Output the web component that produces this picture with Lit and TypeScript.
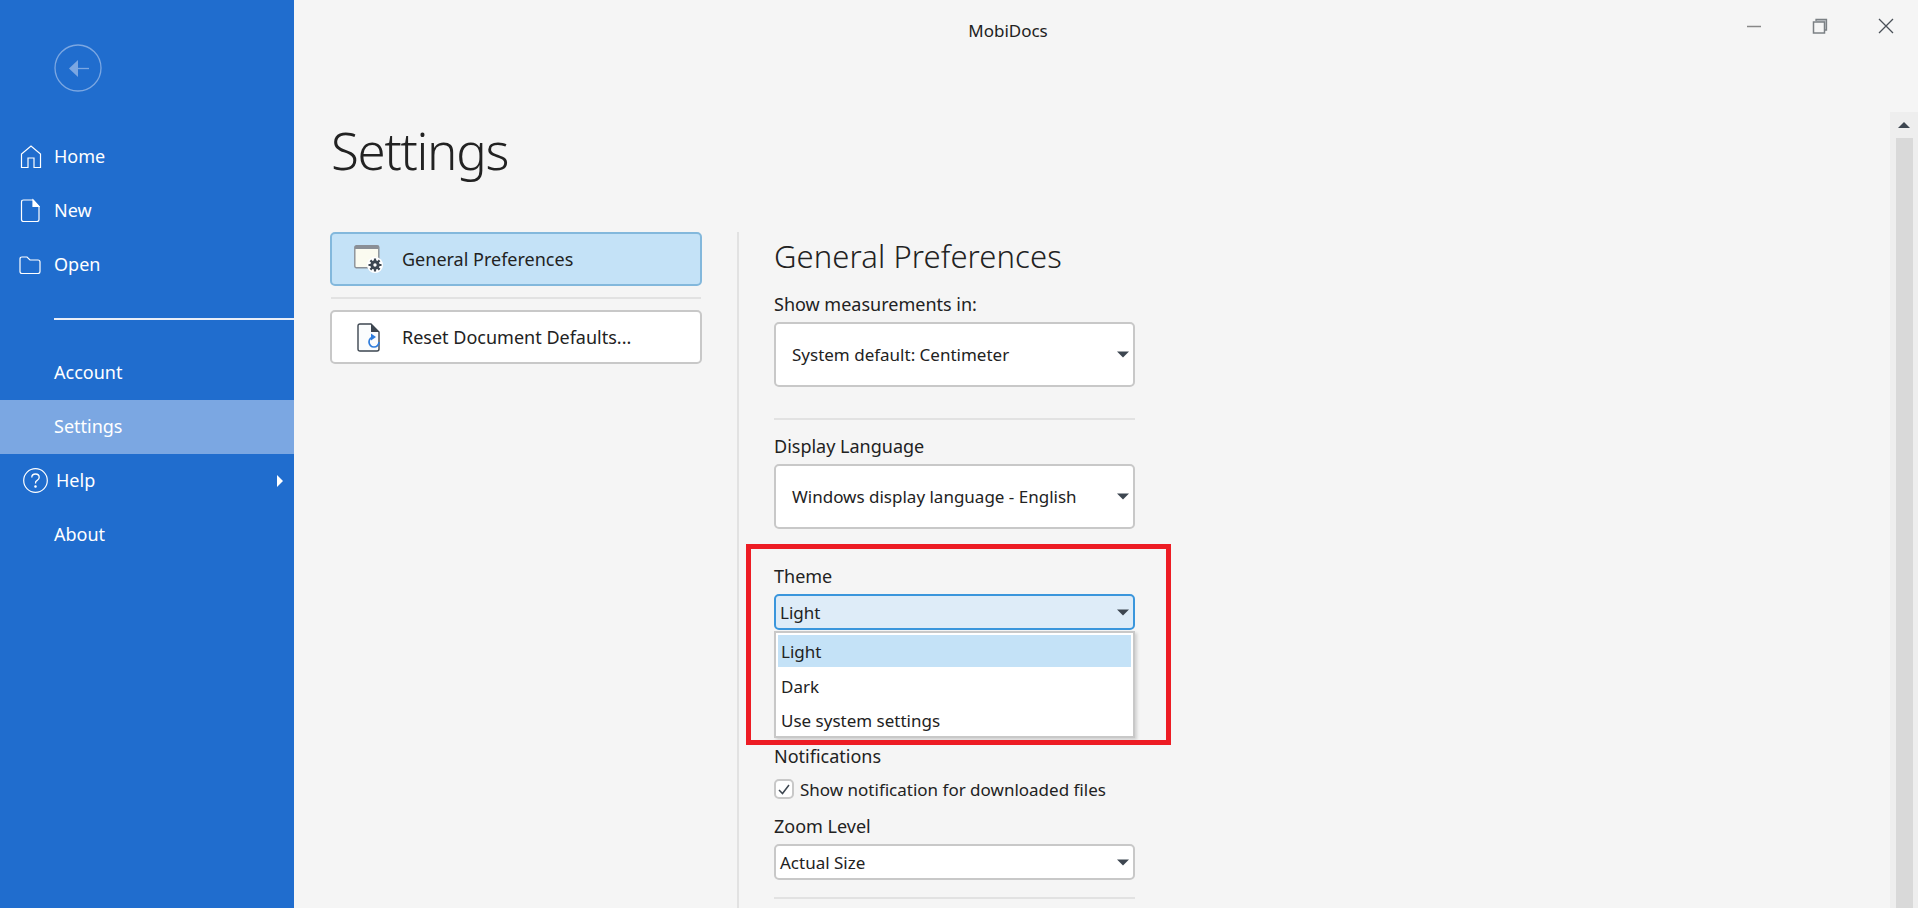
import { LitElement, html, css } from "lit";
import { customElement } from "lit/decorators.js";

const caret = html`<svg width="12" height="7" viewBox="0 0 12 7"><path d="M0 0.5h12L6 6.5z" fill="#3d4650"/></svg>`;

const select = (label: string, cls = "") => html`
  <div class="select ${cls}">
    <span>${label}</span>
    ${caret}
  </div>
`;

@customElement("app-root")
export class AppRoot extends LitElement {
  static styles = css`
    :host {
      display: flex;
      height: 100vh;
      overflow: hidden;
      background: #f5f5f5;
      color: #222;
      font-family: "Noto Sans", "Open Sans", sans-serif;
      font-size: 17px;
    }

    /* left blue panel */
    .side {
      width: 294px;
      flex: none;
      background: #206dce;
      color: #fff;
      padding-top: 44px;
    }
    .back {
      display: block;
      margin: 0 0 37px 54px;
    }
    .nav-item {
      height: 54px;
      display: flex;
      align-items: center;
      position: relative;
      font-size: 18px;
    }
    .nav-item.low {
      box-sizing: border-box;
      padding-bottom: 2px;
    }
    .nav-item.active {
      background: #7ba7e2;
    }
    .slot {
      width: 54px;
      flex: none;
      display: flex;
    }
    .slot.wide {
      width: 56px;
    }
    .slot svg {
      fill: none;
      stroke: #fff;
      stroke-width: 1.2;
    }
    .at-19 { margin-left: 19px; }
    .at-20 { margin-left: 20px; }
    .at-23 { margin-left: 23px; }
    .nav-rule {
      height: 2px;
      background: #e8eef8;
      margin: 27px 0 26px 54px;
    }
    .help-arrow {
      position: absolute;
      right: 11px;
      top: 21px;
    }

    /* everything right of the panel */
    .main {
      flex: 1;
      min-width: 0;
      display: flex;
      flex-direction: column;
    }
    .titlebar {
      height: 60px;
      flex: none;
      display: flex;
      align-items: center;
      justify-content: center;
      position: relative;
      padding-right: 196px;
    }
    .win {
      position: absolute;
      right: 24px;
      top: 18px;
      display: flex;
      gap: 50px;
      align-items: center;
    }
    .body {
      flex: 1;
      min-height: 0;
      display: flex;
    }
    .content {
      flex: 1;
      min-width: 0;
      padding-left: 36px;
      display: flex;
      flex-direction: column;
    }
    .scrollbar {
      width: 28px;
      flex: none;
      margin-top: 52px;
      background: #eeeeee;
      display: flex;
      flex-direction: column;
      align-items: center;
    }
    .scrollbar svg {
      margin: 10px 0;
    }
    .thumb {
      flex: 1;
      width: 17px;
      background: #d9d9d9;
    }

    h1 {
      margin: 58px 0 50px 1px;
      font-weight: 300;
      font-size: 51px;
      letter-spacing: -1.3px;
      line-height: 64px;
      color: #222;
    }
    .columns {
      flex: 1;
      min-height: 0;
      display: flex;
      font-size: 18px;
    }
    .left {
      width: 372px;
      flex: none;
    }
    .btn {
      height: 54px;
      box-sizing: border-box;
      border: 2px solid #c8c8c8;
      border-radius: 5px;
      background: #fff;
      display: flex;
      align-items: center;
      padding-left: 22px;
    }
    .btn.selected {
      background: #c4e2f7;
      border-color: #83b8dc;
    }
    .btn .icon {
      width: 30px;
      margin-right: 18px;
      display: flex;
      justify-content: center;
    }
    .btn-rule {
      height: 2px;
      background: #e2e2e2;
      margin: 11px 1px;
    }
    .right {
      margin-left: 35px;
      padding-left: 35px;
      border-left: 2px solid #e2e2e2;
      width: 361px;
    }
    h2 {
      margin: 0;
      font-weight: 300;
      font-size: 31px;
      letter-spacing: 0.1px;
      line-height: 40px;
      padding-top: 4px;
      height: 56px;
    }
    .label {
      line-height: 24px;
      display: block;
    }
    .label.zoom {
      margin-top: 15px;
    }
    .select {
      box-sizing: border-box;
      border: 2px solid #c8c8c8;
      border-radius: 5px;
      background: #fff;
      display: flex;
      align-items: center;
      justify-content: space-between;
      padding: 0 4px;
      height: 36px;
      margin-top: 6px;
      font-size: 17px;
    }
    .select.tall {
      height: 65px;
      margin-top: 6px;
      padding-left: 16px;
    }
    .select.focus {
      background: #deecf8;
      border-color: #3a96dc;
    }
    .rule {
      height: 2px;
      background: #e2e2e2;
    }
    .rule.a { margin: 31px 0 14px; }
    .rule.b { margin: 18px 0 15px; }
    .rule.c { margin-top: 17px; }
    .theme {
      position: relative;
      height: 180px;
    }
    .popup {
      position: absolute;
      top: 67px;
      left: 0;
      right: 0;
      box-sizing: border-box;
      height: 107px;
      background: #fff;
      border: 2px solid #c8c8c8;
      box-shadow: 2px 2px 3px rgba(0, 0, 0, 0.15);
      padding: 2px;
      font-size: 17px;
    }
    .option {
      height: 34px;
      box-sizing: border-box;
      padding: 0 0 2px 3px;
      display: flex;
      align-items: center;
    }
    .option.on {
      background: #c4e2f7;
      height: 32px;
      padding-bottom: 0;
      margin-bottom: 3px;
    }
    .check-row {
      display: flex;
      align-items: center;
      gap: 6px;
      margin-top: 11px;
      height: 20px;
      font-size: 17px;
    }
    .check {
      width: 20px;
      height: 20px;
      box-sizing: border-box;
      border: 2px solid #c8c8c8;
      border-radius: 5px;
      background: #fff;
      display: flex;
      align-items: center;
      justify-content: center;
    }

    /* review marking on top of the picture */
    .mark {
      position: absolute;
      left: 746px;
      top: 544px;
      width: 425px;
      height: 201px;
      box-sizing: border-box;
      border: 5px solid #ed1c24;
      pointer-events: none;
    }
  `;

  render() {
    return html`
      <aside class="side">
        <svg class="back" width="48" height="48" viewBox="0 0 48 48">
          <circle cx="24" cy="24" r="23" fill="none" stroke="#7ba7e2" stroke-width="1.300"/>
          <path d="M15 24.500l9-8.500v17z" fill="#7ba7e2"/>
          <path d="M22 24.500h13" stroke="#7ba7e2" stroke-width="1.300"/>
        </svg>
        <div class="nav-item">
          <span class="slot"><svg class="at-20" width="22" height="24" viewBox="0 0 22 24"><path d="M1.500 23.500V10L11 2l9.500 8v13.500H14v-9.500H8v9.500z"/></svg></span>
          Home
        </div>
        <div class="nav-item">
          <span class="slot"><svg class="at-20" width="20" height="24" viewBox="0 0 20 24"><path d="M3.500 2H13l6 6.500V21.500q0 2-2 2H3.500q-2 0-2-2V4q0-2 2-2z"/><path d="M13 2l6 6.500h-6z" fill="#fff"/></svg></span>
          New
        </div>
        <div class="nav-item">
          <span class="slot"><svg class="at-19" width="22" height="20" viewBox="0 0 22 20"><path d="M1 5q0-2 2-2h5l3 3h8q2 0 2 2v9.500q0 2-2 2H3q-2 0-2-2z"/></svg></span>
          Open
        </div>
        <div class="nav-rule"></div>
        <div class="nav-item low"><span class="slot"></span>Account</div>
        <div class="nav-item low active"><span class="slot"></span>Settings</div>
        <div class="nav-item low">
          <span class="slot wide">
            <svg class="at-23" width="25" height="25" viewBox="0 0 25 25">
              <circle cx="12.500" cy="12.500" r="11.800"/>
              <path d="M8.800 9.500q0-3.500 3.700-3.500t3.700 3.300q0 2-2 3t-1.700 3.200" stroke-width="1.300"/>
              <circle cx="12.500" cy="18.500" r="0.700" fill="#fff"/>
            </svg>
          </span>
          Help
          <svg class="help-arrow" width="6" height="12" viewBox="0 0 6 12"><path d="M0 0l6 6-6 6z" fill="#fff"/></svg>
        </div>
        <div class="nav-item low"><span class="slot"></span>About</div>
      </aside>

      <div class="main">
        <div class="titlebar">
          MobiDocs
          <div class="win">
            <svg width="16" height="16" viewBox="0 0 16 16"><path d="M1 8.500h14" stroke="#888" stroke-width="1.500"/></svg>
            <svg width="16" height="16" viewBox="0 0 16 16" fill="none" stroke="#7b8084" stroke-width="1.300">
              <path d="M4 3V1.500h10.500V12H13" fill="#c4c8cc"/>
              <rect x="1.500" y="4" width="11" height="11" fill="#f5f5f5" stroke-width="1.500"/>
            </svg>
            <svg width="16" height="16" viewBox="0 0 16 16"><path d="M1 1l14 14M15 1L1 15" stroke="#4a5058" stroke-width="1.300"/></svg>
          </div>
        </div>
        <div class="body">
          <div class="content">
            <h1>Settings</h1>
            <div class="columns">
              <div class="left">
                <div class="btn selected">
                  <div class="icon">
                    <svg width="30" height="28" viewBox="0 0 30 28">
                      <rect x="0.800" y="0.800" width="24" height="22" rx="1.500" fill="#fbfbf0" stroke="#8a8f96" stroke-width="1.400"/>
                      <rect x="1" y="1" width="23.500" height="3" fill="#8a8f96"/>
                      <circle cx="21" cy="20" r="8" fill="#fff"/>
                      <circle cx="21" cy="20" r="3.200" fill="none" stroke="#3d4650" stroke-width="3"/>
                      <path d="M21 13.500v3M21 23.500v3M14.500 20h3M24.500 20h3M16.400 15.400l2.100 2.100M23.500 22.500l2.100 2.100M25.600 15.400l-2.100 2.100M18.500 22.500l-2.100 2.100" stroke="#3d4650" stroke-width="2.200"/>
                    </svg>
                  </div>
                  General Preferences
                </div>
                <div class="btn-rule"></div>
                <div class="btn">
                  <div class="icon">
                    <svg width="24" height="29" viewBox="0 0 24 29" fill="none">
                      <path d="M3 1h11l8 8v17q0 2-2 2H3q-2 0-2-2V3q0-2 2-2z" fill="#fafcfd" stroke="#3d4650" stroke-width="1.400"/>
                      <path d="M14 1l8 8h-8z" fill="#3d4650"/>
                      <path d="M22 19a5 5 0 1 1-5-5" stroke="#2e7cdc" stroke-width="1.700"/>
                      <path d="M14 10.500l5 3.500-5 3.500z" fill="#2e7cdc"/>
                    </svg>
                  </div>
                  Reset Document Defaults...
                </div>
              </div>
              <div class="right">
                <h2>General Preferences</h2>
                <span class="label">Show measurements in:</span>
                ${select("System default: Centimeter", "tall")}
                <div class="rule a"></div>
                <span class="label">Display Language</span>
                ${select("Windows display language - English", "tall")}
                <div class="rule b"></div>
                <div class="theme">
                  <span class="label">Theme</span>
                  ${select("Light", "focus")}
                  <div class="popup">
                    <div class="option on">Light</div>
                    <div class="option">Dark</div>
                    <div class="option">Use system settings</div>
                  </div>
                </div>
                <span class="label">Notifications</span>
                <div class="check-row">
                  <span class="check">
                    <svg width="12" height="11" viewBox="0 0 12 11"><path d="M1 6l3.500 3.500L11 1" fill="none" stroke="#3d4650" stroke-width="1.500"/></svg>
                  </span>
                  Show notification for downloaded files
                </div>
                <span class="label zoom">Zoom Level</span>
                ${select("Actual Size")}
                <div class="rule c"></div>
              </div>
            </div>
          </div>
          <div class="scrollbar">
            <svg width="12" height="6" viewBox="0 0 12 6"><path d="M6 0l6 6H0z" fill="#3d4650"/></svg>
            <div class="thumb"></div>
          </div>
        </div>
      </div>
      <div class="mark"></div>
    `;
  }
}
